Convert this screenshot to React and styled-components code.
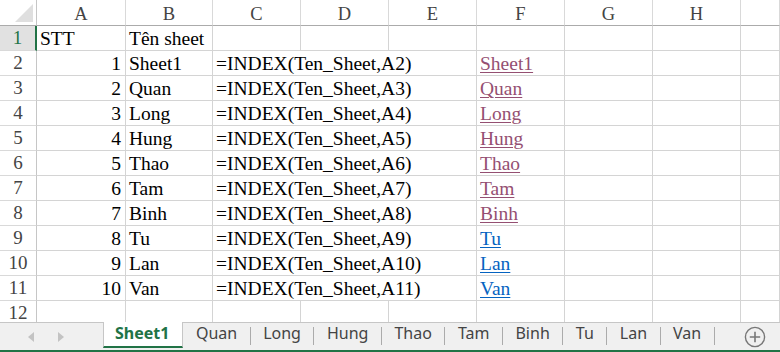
import React from 'react';
import styled, { createGlobalStyle, css } from 'styled-components';

const Global = createGlobalStyle`
  html, body { margin: 0; padding: 0; background: #fff; }
  body { width: 780px; height: 352px; overflow: hidden; }
`;

const Window = styled.div`
  width: 780px;
  height: 352px;
  display: flex;
  flex-direction: column;
  overflow: hidden;
`;

const Sheet = styled.div`
  flex: 0 0 322px;
  overflow: hidden;
  display: grid;
  grid-template-columns: 37px 89px 87px repeat(6, 88px) 1fr;
  grid-template-rows: 26px repeat(12, 25px);
  font-family: "Liberation Serif", "Times New Roman", serif;
`;

const Corner = styled.div`
  box-sizing: border-box;
  border-right: 1px solid #c6c6c6;
  border-bottom: 1px solid #ababab;
  position: relative;
  background: #fff;
  svg { position: absolute; right: 3px; bottom: 3px; }
`;

const ColHeader = styled.div`
  box-sizing: border-box;
  border-right: 1px solid #d9d9d9;
  border-bottom: 1px solid #ababab;
  text-align: center;
  font-size: 18.5px;
  line-height: 21px;
  padding-top: 4px;
  color: #444;
  background: #fff;
`;

const RowHeader = styled.div`
  box-sizing: border-box;
  border-right: 1px solid #c6c6c6;
  border-bottom: 1px solid #d9d9d9;
  text-align: center;
  font-size: 19px;
  line-height: 22px;
  padding-top: 1px;
  color: #444;
  background: #fff;
  ${(p) =>
    p.$active &&
    css`
      background: #e1e1e1;
      color: #217346;
      border-right: 2px solid #217346;
    `}
`;

const Cell = styled.div`
  box-sizing: border-box;
  border-right: 1px solid #d4d4d4;
  border-bottom: 1px solid #d4d4d4;
  font-size: 19.5px;
  line-height: 23px;
  padding: 1px 4px 0 3px;
  color: #000;
  white-space: nowrap;
  text-align: ${(p) => (p.$right ? 'right' : 'left')};
  ${(p) => p.$span && css`grid-column: span ${p.$span};`}
`;

const Link = styled.span`
  color: ${(p) => (p.$visited ? '#954f72' : '#0563c1')};
  text-decoration: underline;
  text-decoration-thickness: 1px;
  text-underline-offset: 2px;
`;

const TabBar = styled.div`
  flex: 0 0 30px;
  box-sizing: border-box;
  border-top: 1px solid #c6c6c6;
  border-bottom: 2px solid #217346;
  background: #f0f0f0;
  display: flex;
  align-items: flex-start;
  font-family: "Noto Sans", "Open Sans", sans-serif;
  font-size: 16px;
`;

const Nav = styled.div`
  width: 103px;
  height: 27px;
  box-sizing: border-box;
  padding-left: 28px;
  display: flex;
  align-items: center;
  gap: 24px;
`;

const Tab = styled.div`
  box-sizing: border-box;
  height: 20px;
  line-height: 20px;
  padding: 0 12.5px;
  color: #444;
  white-space: nowrap;
  ${(p) =>
    p.$active &&
    css`
      height: 26px;
      margin-top: -1px;
      padding: 1px 13px 0 11px;
      background: #fff;
      border-left: 1px solid #c6c6c6;
      border-right: 1px solid #c6c6c6;
      border-bottom: 2px solid #217346;
      color: #217346;
      font-weight: 700;
    `}
`;

const Divider = styled.div`
  width: 1px;
  height: 18px;
  margin-top: 4px;
  background: #ababab;
`;

const Spacer = styled.div`
  flex: 1;
`;

const AddButton = styled.div`
  width: 22px;
  height: 27px;
  margin-right: 14px;
  display: flex;
  align-items: center;
  justify-content: center;
`;

const cols = ['A', 'B', 'C', 'D', 'E', 'F', 'G', 'H', ''];
const names = ['Sheet1', 'Quan', 'Long', 'Hung', 'Thao', 'Tam', 'Binh', 'Tu', 'Lan', 'Van'];

const Arrow = ({ dir }) => (
  <svg width="6" height="10" viewBox="0 0 6 10">
    {dir === 'left' ? (
      <polygon points="6,0 6,10 0,5" fill="#c3c3c3" />
    ) : (
      <polygon points="0,0 0,10 6,5" fill="#c3c3c3" />
    )}
  </svg>
);

export default function App() {
  return (
    <Window>
      <Global />
      <Sheet>
        <Corner>
          <svg width="18" height="18" viewBox="0 0 18 18">
            <polygon points="18,0 18,18 0,18" fill="#dfdfdf" />
          </svg>
        </Corner>
        {cols.map((c, i) => (
          <ColHeader key={i}>{c}</ColHeader>
        ))}

        <RowHeader $active>1</RowHeader>
        <Cell>STT</Cell>
        <Cell>Tên sheet</Cell>
        {Array.from({ length: 7 }).map((_, i) => (
          <Cell key={i} />
        ))}

        {names.map((n, i) => (
          <React.Fragment key={n}>
            <RowHeader>{i + 2}</RowHeader>
            <Cell $right>{i + 1}</Cell>
            <Cell>{n}</Cell>
            <Cell $span={3}>=INDEX(Ten_Sheet,A{i + 2})</Cell>
            <Cell>
              <Link $visited={i < 7}>{n}</Link>
            </Cell>
            <Cell />
            <Cell />
            <Cell />
          </React.Fragment>
        ))}

        <RowHeader>12</RowHeader>
        {Array.from({ length: 9 }).map((_, i) => (
          <Cell key={i} />
        ))}
      </Sheet>

      <TabBar>
        <Nav>
          <Arrow dir="left" />
          <Arrow dir="right" />
        </Nav>
        {names.map((n, i) => (
          <React.Fragment key={n}>
            <Tab $active={i === 0}>{n}</Tab>
            {i > 0 && <Divider />}
          </React.Fragment>
        ))}
        <Spacer />
        <AddButton>
          <svg width="22" height="22" viewBox="0 0 22 22">
            <circle cx="11" cy="11" r="9.6" fill="none" stroke="#777" strokeWidth="1.4" />
            <path d="M11 5.8v10.4M5.8 11h10.4" stroke="#777" strokeWidth="1.6" />
          </svg>
        </AddButton>
      </TabBar>
    </Window>
  );
}
